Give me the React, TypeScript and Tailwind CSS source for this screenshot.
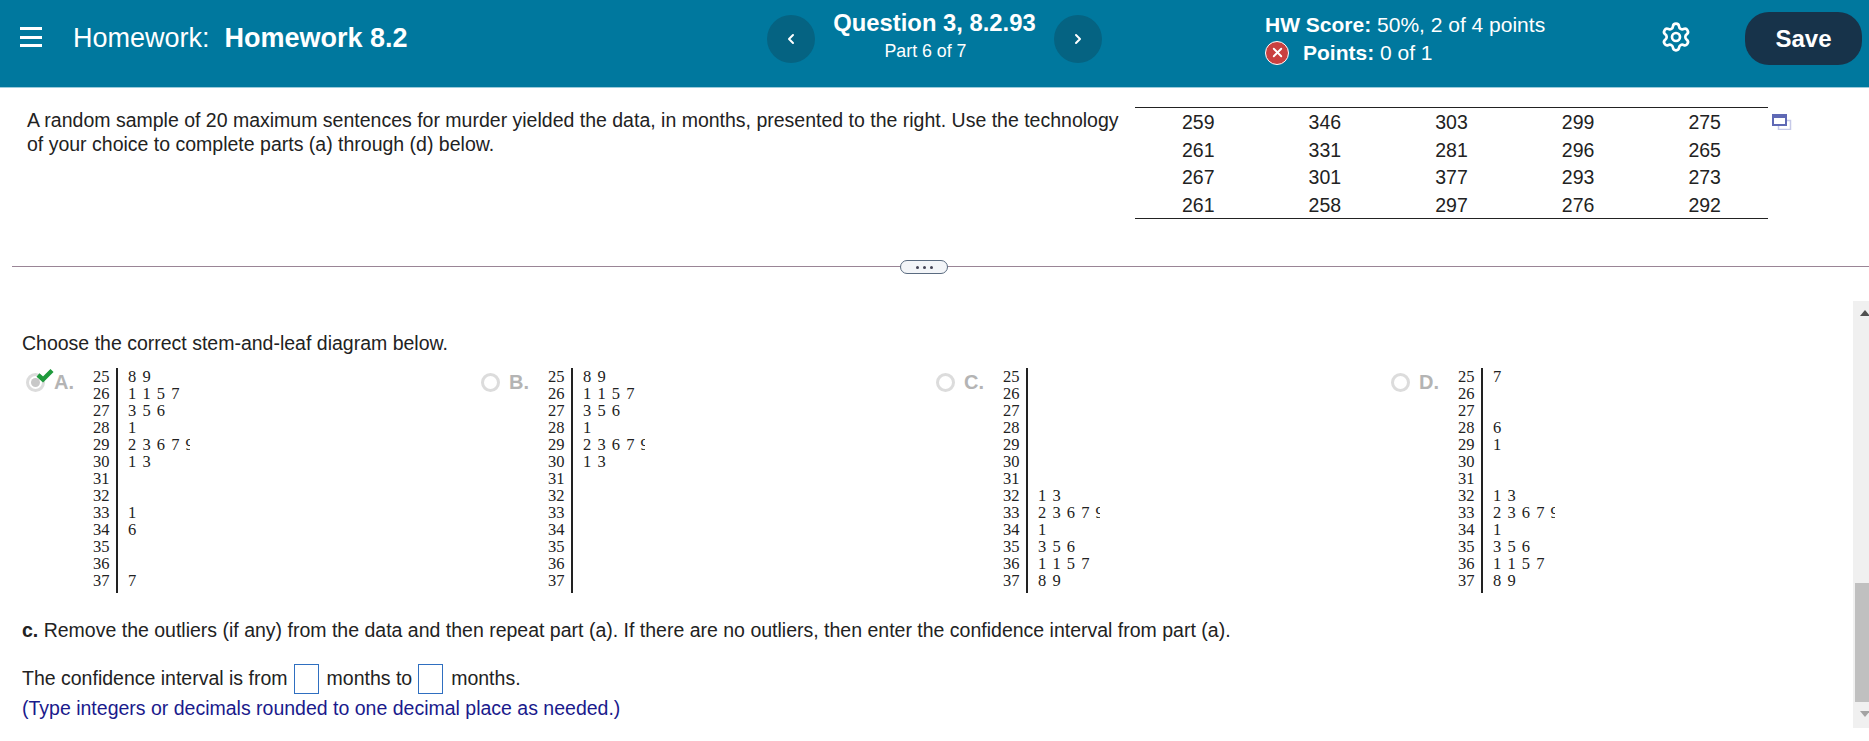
import { ChevronLeft, ChevronRight, Settings, X } from "lucide-react";

const stems = ["25","26","27","28","29","30","31","32","33","34","35","36","37"];
type Leaves = Record<string,string>;
const opts: {l:string; leaves:Leaves; sel?:boolean}[] = [
  {l:"A.", sel:true, leaves:{"25":"8 9","26":"1 1 5 7","27":"3 5 6","28":"1","29":"2 3 6 7 9","30":"1 3","33":"1","34":"6","37":"7"}},
  {l:"B.", leaves:{"25":"8 9","26":"1 1 5 7","27":"3 5 6","28":"1","29":"2 3 6 7 9","30":"1 3"}},
  {l:"C.", leaves:{"32":"1 3","33":"2 3 6 7 9","34":"1","35":"3 5 6","36":"1 1 5 7","37":"8 9"}},
  {l:"D.", leaves:{"25":"7","28":"6","29":"1","32":"1 3","33":"2 3 6 7 9","34":"1","35":"3 5 6","36":"1 1 5 7","37":"8 9"}},
];
const table = [
  ["259","346","303","299","275"],
  ["261","331","281","296","265"],
  ["267","301","377","293","273"],
  ["261","258","297","276","292"],
];

function Option({o}:{o:typeof opts[number]}) {
  return (
    <div className="flex items-start">
      <div className="relative mt-[4px] w-[19px] h-[19px] rounded-full border-[3px] border-[#dcdcdc] shrink-0 flex items-center justify-center">
        {o.sel && <div className="w-[9px] h-[9px] rounded-full bg-[#c8c8c8]" />}
        {o.sel && (
          <svg className="absolute left-[7px] top-[-8px]" width="18" height="15" viewBox="0 0 18 15">
            <path d="M2 7 L7 11.5 L16 2.5" fill="none" stroke="#1f9a3c" strokeWidth="4.4" />
          </svg>
        )}
      </div>
      <span className="ml-[9px] w-[39px] shrink-0 text-[20px] leading-[26px] font-bold text-[#b4b4b4]">{o.l}</span>
      <div className="flex font-['Liberation_Serif',serif] text-[16.5px] leading-[17px] text-[#222] -mt-[1px]">
        <div className="w-[23px] shrink-0">
          {stems.map(s => <div key={s} className="h-[17px]">{s}</div>)}
        </div>
        <div className="w-[74px] border-l-2 border-[#222] pl-[10px] overflow-hidden pb-[4px]">
          {stems.map(s => <div key={s} className="h-[17px] whitespace-nowrap [word-spacing:2px]">{o.leaves[s] ?? ""}</div>)}
        </div>
      </div>
    </div>
  );
}

export default function App() {
  return (
    <div className="w-[1869px] h-[741px] overflow-hidden bg-white font-['Liberation_Sans',Arial,sans-serif] text-[19.5px] text-[#222] flex flex-col">
      <header className="h-[88px] shrink-0 bg-[#00789e] border-b border-[#9ccbdb] text-white flex items-start">
        <div className="mt-[27px] ml-[20px] w-[22px] h-[20px] flex flex-col justify-between">
          <div className="h-[3px] bg-white" /><div className="h-[3px] bg-white" /><div className="h-[3px] bg-white" />
        </div>
        <div className="ml-[31px] mt-[22px] text-[27px] leading-[32px] w-[694px]">Homework:&nbsp; <b>Homework 8.2</b></div>
        <button className="mt-[15px] w-[48px] h-[48px] rounded-full bg-[#056382] flex items-center justify-center"><ChevronLeft size={16} strokeWidth={3} /></button>
        <div className="w-[239px] mt-[8px] text-center">
          <div className="text-[23.8px] font-bold leading-[30px]">Question 3, 8.2.93</div>
          <div className="text-[17.8px] leading-[26px] pr-[18px]">Part 6 of 7</div>
        </div>
        <button className="mt-[15px] w-[48px] h-[48px] rounded-full bg-[#056382] flex items-center justify-center"><ChevronRight size={16} strokeWidth={3} /></button>
        <div className="ml-[163px] w-[397px] mt-[11px] text-[21px]">
          <div className="leading-[27px]"><b>HW Score:</b> 50%, 2 of 4 points</div>
          <div className="flex items-center mt-[1px] leading-[27px]">
            <span className="w-[24px] h-[24px] rounded-full bg-[#c94040] border border-white flex items-center justify-center"><X size={15} strokeWidth={3} /></span>
            <span className="ml-[14px]"><b>Points:</b> 0 of 1</span>
          </div>
        </div>
        <Settings className="mt-[21px] -ml-[2px]" size={32} strokeWidth={2} />
        <button className="ml-[53px] mt-[12px] w-[117px] h-[53px] rounded-[24px] bg-[#17334a] text-[24px] font-bold">Save</button>
      </header>

      <section className="flex items-start h-[178px] shrink-0">
        <p className="ml-[27px] w-[1108px] mt-[20px] leading-[24px] text-[#222]">A random sample of 20 maximum sentences for murder yielded the data, in months, presented to the right. Use the technology of your choice to complete parts (a) through (d) below.</p>
        <div className="mt-[19px] w-[633px] border-y border-[#222]">
          {table.map((r,i) => (
            <div key={i} className="grid grid-cols-5 h-[27.5px] items-center text-center">
              {r.map((c,j) => <div key={j}>{c}</div>)}
            </div>
          ))}
        </div>
        <svg className="mt-[26px] ml-[4px]" width="20" height="16" viewBox="0 0 20 16">
          <rect x="6.5" y="6.5" width="12" height="9" fill="#fff" stroke="#c6c9e8" strokeWidth="1.5" />
          <rect x="1" y="1" width="13" height="10" fill="#fff" stroke="#5f69b5" strokeWidth="2" />
          <rect x="1" y="1" width="13" height="3" fill="#5f69b5" />
        </svg>
      </section>

      <div className="relative h-[35px] shrink-0">
        <div className="ml-[12px] h-[1px] bg-[#9a8596]" />
        <div className="absolute left-[900px] top-[-6px] w-[48px] h-[14px] rounded-[7px] border border-[#5a6b80] bg-[#f3f5f8] flex items-center justify-center gap-[4px]">
          <span className="w-[3px] h-[3px] rounded-full bg-[#445]" /><span className="w-[3px] h-[3px] rounded-full bg-[#445]" /><span className="w-[3px] h-[3px] rounded-full bg-[#445]" />
        </div>
      </div>

      <div className="flex h-[427px] shrink-0">
        <main className="flex-1 min-w-0 pl-[22px] pt-[30px]">
          <div className="leading-[24px]">Choose the correct stem-and-leaf diagram below.</div>
          <div className="grid grid-cols-4 w-[1820px] ml-[4px] mt-[14px]">
            {opts.map(o => <Option key={o.l} o={o} />)}
          </div>
          <div className="mt-[25px] leading-[24px]"><b>c.</b> Remove the outliers (if any) from the data and then repeat part (a). If there are no outliers, then enter the confidence interval from part (a).</div>
          <div className="mt-[22px] flex items-center h-[30px]">
            <span>The confidence interval is from</span>
            <span className="ml-[6px] w-[25px] h-[30px] border border-[#2f6fc0]" />
            <span className="ml-[8px]">months to</span>
            <span className="ml-[6px] w-[25px] h-[30px] border border-[#2f6fc0]" />
            <span className="ml-[8px]">months.</span>
          </div>
          <div className="mt-[2px] leading-[24px] text-[#1a1a8c]">(Type integers or decimals rounded to one decimal place as needed.)</div>
        </main>
        <div className="w-[16px] shrink-0 bg-[#f0f0f0] flex flex-col items-end">
          <div className="mt-[9px] mr-[-1px] w-0 h-0 border-x-[5px] border-x-transparent border-b-[6px] border-b-[#505050]" />
          <div className="mt-[267px] w-[14px] h-[119px] bg-[#c0c0c0]" />
          <div className="mt-[9px] mr-[-1px] w-0 h-0 border-x-[5px] border-x-transparent border-t-[6px] border-t-[#a3a3a3]" />
        </div>
      </div>
    </div>
  );
}
